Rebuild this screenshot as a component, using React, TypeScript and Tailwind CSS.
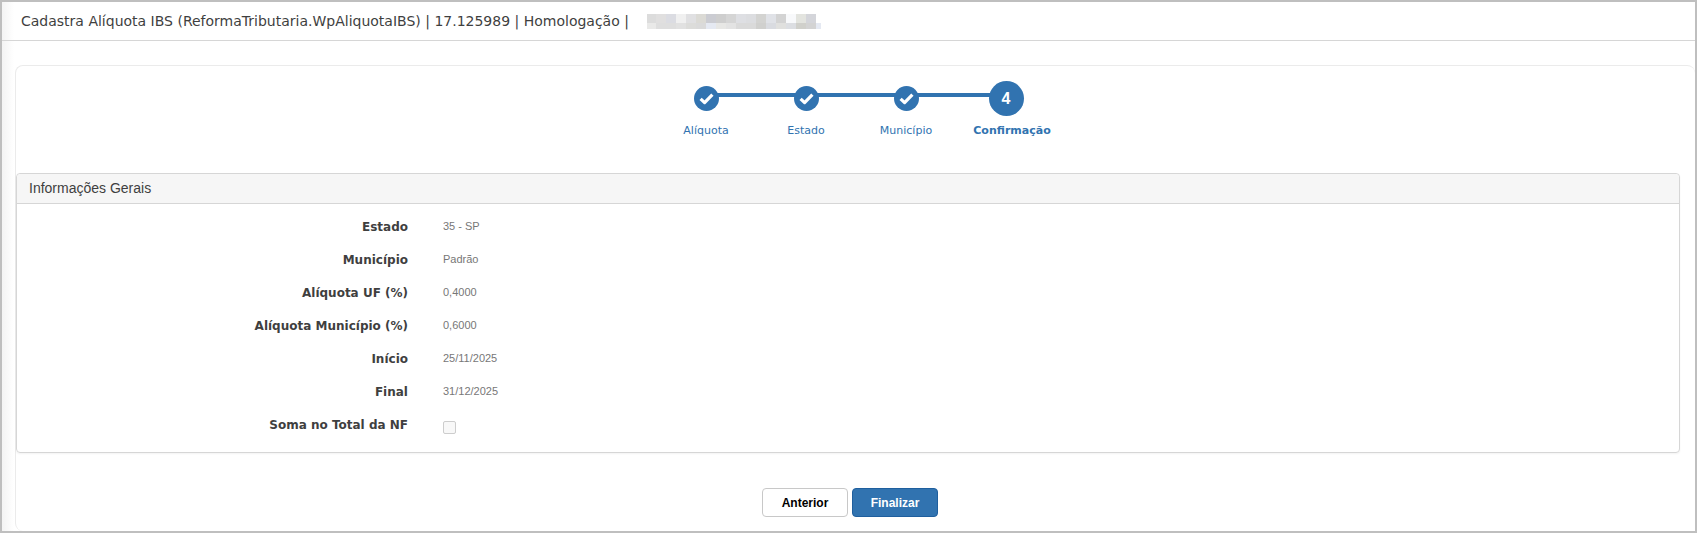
import { useState } from 'react';

type Step = { id: number; label: string };

const STEPS: Step[] = [
  { id: 1, label: 'Alíquota' },
  { id: 2, label: 'Estado' },
  { id: 3, label: 'Município' },
  { id: 4, label: 'Confirmação' },
];

const FIELDS = [
  { label: 'Estado', value: '35 - SP' },
  { label: 'Município', value: 'Padrão' },
  { label: 'Alíquota UF (%)', value: '0,4000' },
  { label: 'Alíquota Município (%)', value: '0,6000' },
  { label: 'Início', value: '25/11/2025' },
  { label: 'Final', value: '31/12/2025' },
];

// pixelated user name, one colour per 10px block
const MASK_TOP = ['#dcdcdc', '#e0dfdf', '#dbdce2', '#f0f0f0', '#e0e0e2', '#dbdad5', '#cbccd2', '#cecece', '#d5d5d5', '#dedfe3', '#dcdde0', '#d3d3d1', '#e0e2e7', '#d3d3d3', '#f8f9fb', '#e3e4df', '#d4d5da'];
const MASK_BOTTOM = ['#e9e9e8', '#dedede', '#dedede', '#e1e1e1', '#dcdcda', '#dadada', '#e5e9f2', '#e7e7e5', '#e3e3e3', '#dadada', '#dadada', '#d0d0ce', '#d9dbe0', '#e0e0de', '#dcdee2', '#d0d0cb', '#d3d3d3'];

function MaskedUser() {
  return (
    <svg width="174" height="15" viewBox="0 0 174 15" shapeRendering="crispEdges" aria-hidden="true">
      {MASK_TOP.map((c, i) => <rect key={i} x={i * 10 - 1} y="0" width="10" height="9" fill={c} />)}
      {MASK_BOTTOM.map((c, i) => <rect key={i} x={i * 10 - 1} y="9" width="10" height="6" fill={c} />)}
      <rect x="169" y="9" width="5" height="6" fill="#e5e9f2" />
    </svg>
  );
}

function StepItem({ step, current, last }: { step: Step; current: number; last: boolean }) {
  const done = step.id < current;
  return (
    <li className="relative flex w-[100px] flex-col items-center">
      {!last && <span className="absolute top-3 left-1/2 h-1 w-full bg-[#3173b0]" />}
      <div className="relative flex h-[35px] items-center">
        {done ? (
          <span className="flex size-[25px] items-center justify-center rounded-full bg-[#3173b0]">
            <svg width="15" height="12" viewBox="0 0 15 12" fill="none" stroke="#fff" strokeWidth="3.2" strokeLinejoin="round">
              <path d="M1.6 5.8 5.6 9.6 13.4 1.6" />
            </svg>
          </span>
        ) : (
          <span className="flex size-[35px] items-center justify-center rounded-full bg-[#3173b0] font-['Liberation_Sans',sans-serif] text-base font-bold text-white">
            {step.id}
          </span>
        )}
      </div>
      <span className={`mt-[5px] text-[11px] leading-5 text-[#3173b0] ${done ? '' : 'pl-3 font-bold'}`}>{step.label}</span>
    </li>
  );
}

export default function App() {
  const [current, setCurrent] = useState(4);

  return (
    <div className="flex min-h-screen flex-col overflow-hidden border-2 border-[#bfbfbf] bg-linear-to-r from-[#f4f4f4] to-white to-[12px] font-['DejaVu_Sans',sans-serif] text-[#3f3f3f]">
      <header className="flex h-[39px] items-center gap-[18px] border-b border-[#d6d6d6] pl-[19px]">
        <h1 className="text-sm">Cadastra Alíquota IBS (ReformaTributaria.WpAliquotaIBS) | 17.125989 | Homologação |</h1>
        <MaskedUser />
      </header>

      <main className="flex grow flex-col pt-6 pl-[13px]">
        <section className="grow rounded-lg border-t border-l border-[#ebebeb] bg-white pr-[15px]">
          <ol className="flex justify-center pt-[15px] pl-4">
            {STEPS.map((s, i) => (
              <StepItem key={s.id} step={s} current={current} last={i === STEPS.length - 1} />
            ))}
          </ol>

          <div className="mt-8 rounded border border-[#d6d6d6] shadow-xs">
            <h2 className="rounded-t border-b border-[#d6d6d6] bg-[#f6f6f6] px-3 font-['Liberation_Sans',sans-serif] text-sm leading-[29px]">
              Informações Gerais
            </h2>
            <div className="pt-1.5 pb-[11px]">
              <dl>
                {FIELDS.map(f => (
                  <div key={f.label} className="flex h-[33px] items-center">
                    <dt className="w-[391px] text-right text-xs font-bold">{f.label}</dt>
                    <dd className="pl-[35px] font-['Liberation_Sans',sans-serif] text-[11px] text-[#777]">{f.value}</dd>
                  </div>
                ))}
              </dl>
              <div className="flex h-[33px] items-center">
                <label htmlFor="soma" className="w-[391px] text-right text-xs font-bold">Soma no Total da NF</label>
                <input
                  id="soma"
                  type="checkbox"
                  disabled
                  className="mt-1.5 ml-[35px] size-[13px] appearance-none rounded-xs border border-[#cdcdcd] bg-[#f8f8f8]"
                />
              </div>
            </div>
          </div>

          <div className="mt-[35px] flex justify-center gap-1 pb-[14px] pl-1 font-['Liberation_Sans',sans-serif] text-xs font-bold">
            <button
              type="button"
              className="h-[29px] w-[86px] rounded border border-[#c8c8c8] bg-white text-black"
              onClick={() => setCurrent(c => Math.max(1, c - 1))}
            >
              Anterior
            </button>
            <button type="button" className="h-[29px] w-[86px] rounded border border-[#1f5f9e] bg-[#3173b0] text-white">
              Finalizar
            </button>
          </div>
        </section>
      </main>
    </div>
  );
}
